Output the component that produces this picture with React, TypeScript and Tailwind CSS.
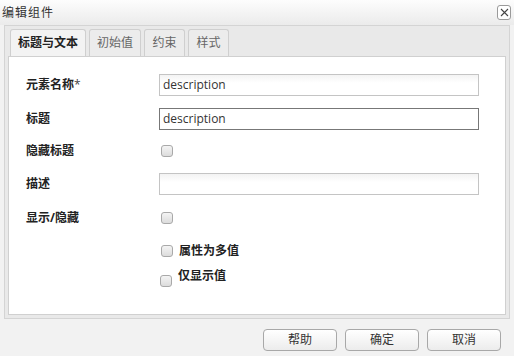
import React from "react";

const font = { fontFamily: '"Open Sans", "Noto Sans CJK SC", sans-serif' };

function Checkbox() {
  return (
    <div className="w-[12px] h-[12px] rounded-[3px] border border-[#a9a9a9] bg-gradient-to-b from-[#f4f4f4] to-[#dcdcdc]" />
  );
}

function Row({ label, children, h }: { label: React.ReactNode; children: React.ReactNode; h: string }) {
  return (
    <div className={`flex items-center ${h}`}>
      <div className="w-[150px] pl-[17px] text-[12px] font-bold text-[#222]">{label}</div>
      {children}
    </div>
  );
}

export default function App() {
  return (
    <div className="w-[514px] h-[356px] bg-[#f2f2f2] flex flex-col text-[#222]" style={font}>
      <div className="h-[25px] flex items-center justify-between pl-[2px] pr-[3px] bg-gradient-to-b from-[#fdfdfd] to-[#ebebeb]">
        <span className="text-[12px] text-[#333] tracking-[1px]">编辑组件</span>
        <div className="w-[14px] h-[15px] rounded-[3px] border border-[#9a9a9a] bg-white flex items-center justify-center">
          <svg width="9" height="9" viewBox="0 0 9 9">
            <path d="M1 1L8 8M8 1L1 8" stroke="#444" strokeWidth="1.1" />
          </svg>
        </div>
      </div>
      <div className="mx-[4px] border border-[#d4d4d4] bg-[#e9e9e9] h-[294px] flex flex-col">
        <div className="flex items-end gap-[3px] pl-[5px] pt-[3px] h-[30px]">
          <div className="h-[27px] w-[76px] flex items-center justify-center border border-b-0 border-[#cfcfcf] bg-[#f3f3f3] rounded-t-[3px] text-[12px] font-bold">
            标题与文本
          </div>
          <div className="h-[27px] w-[52px] flex items-center justify-center border border-b-0 border-[#cfcfcf] bg-[#ececec] rounded-t-[3px] text-[12px] text-[#666]">
            初始值
          </div>
          <div className="h-[27px] w-[41px] flex items-center justify-center border border-b-0 border-[#cfcfcf] bg-[#ececec] rounded-t-[3px] text-[12px] text-[#666]">
            约束
          </div>
          <div className="h-[27px] w-[41px] flex items-center justify-center border border-b-0 border-[#cfcfcf] bg-[#ececec] rounded-t-[3px] text-[12px] text-[#666]">
            样式
          </div>
        </div>
        <div className="mx-[3px] mb-[3px] flex-1 bg-white border border-[#d0d0d0] flex flex-col pt-[17px]">
          <Row
            label={
              <>
                元素名称<span className="font-normal text-[#444]">*</span>
              </>
            }
            h="h-[22px]"
          >
            <div className="w-[320px] h-[22px] border border-[#c4c4c4] bg-gradient-to-b from-[#f3f3f3] to-white to-[40%] flex items-center px-[3px] text-[12px] text-[#333] font-normal">
              description
            </div>
          </Row>
          <div className="h-[12px]" />
          <Row label="标题" h="h-[22px]">
            <div className="w-[320px] h-[22px] border border-[#777] bg-white flex items-center px-[3px] text-[12px] text-[#333]">
              description
            </div>
          </Row>
          <div className="h-[10px]" />
          <Row label="隐藏标题" h="h-[22px]">
            <div className="pl-[2px]">
              <Checkbox />
            </div>
          </Row>
          <div className="h-[11px]" />
          <Row label="描述" h="h-[22px]">
            <div className="w-[320px] h-[22px] border border-[#c4c4c4] bg-gradient-to-b from-[#f3f3f3] to-white to-[40%]" />
          </Row>
          <div className="h-[12px]" />
          <Row label="显示/隐藏" h="h-[22px]">
            <div className="pl-[2px]">
              <Checkbox />
            </div>
          </Row>
          <div className="h-[11px]" />
          <div className="flex items-center h-[22px] pl-[152px] gap-[6px]">
            <Checkbox />
            <span className="text-[12px] font-bold">属性为多值</span>
          </div>
          <div className="h-[6px]" />
          <div className="flex items-start h-[22px] pl-[151px] gap-[6px]">
            <div className="pt-[7px]">
              <Checkbox />
            </div>
            <span className="text-[12px] font-bold leading-[16px]">仅显示值</span>
          </div>
        </div>
      </div>
      <div className="flex justify-end gap-[8px] pr-[13px] pt-[10px]">
        {["帮助", "确定", "取消"].map((t) => (
          <div
            key={t}
            className="w-[74px] h-[22px] rounded-[4px] border border-[#a8a8a8] bg-gradient-to-b from-white to-[#ececec] flex items-center justify-center text-[12px] text-[#333]"
          >
            {t}
          </div>
        ))}
      </div>
    </div>
  );
}
